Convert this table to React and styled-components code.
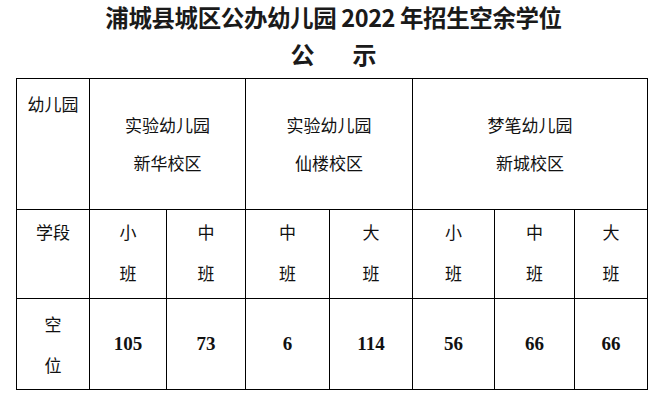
import React from 'react'
import styled, { createGlobalStyle } from 'styled-components'

const GlobalStyle = createGlobalStyle`
  html, body {
    margin: 0;
    padding: 0;
    background: #fff;
    overflow: hidden;
  }
  body {
    font-family: "Liberation Serif", "Noto Sans CJK SC", serif;
    color: #111;
  }
`

const Page = styled.div`
  width: 667px;
  height: 402px;
  padding: 0 16px;
  box-sizing: border-box;
`

const Title = styled.h1`
  margin: 0;
  padding-top: 1px;
  height: 33px;
  line-height: 33px;
  text-align: center;
  font-family: "Noto Sans CJK SC", sans-serif;
  font-weight: 700;
  font-size: 23.5px;
  color: #1a1a1a;
  letter-spacing: -0.4px;
  white-space: nowrap;
`

const Subtitle = styled.h2`
  margin: 4px 0 0;
  height: 32px;
  line-height: 32px;
  text-align: center;
  font-family: "Noto Sans CJK SC", sans-serif;
  font-weight: 700;
  font-size: 24px;
  color: #1a1a1a;
  letter-spacing: 38px;
  padding-left: 38px;
`

const Table = styled.table`
  margin-top: 8px;
  width: 631px;
  border-collapse: collapse;
  table-layout: fixed;
  border: 1.5px solid #000;
`

const Row = styled.tr`
  height: ${p => p.$h}px;
`

const Cell = styled.td`
  border: 1.5px solid #000;
  padding: ${p => (p.$top ? '1px 0 0' : '0')};
  text-align: center;
  vertical-align: ${p => (p.$top ? 'top' : 'middle')};
  font-family: "Noto Sans CJK SC", sans-serif;
  font-size: 17px;
  line-height: ${p => p.$lh || 41}px;
  color: #111;
`

const Number = styled.span`
  font-family: "Liberation Serif", serif;
  font-weight: 700;
  font-size: 19px;
  position: relative;
  top: -1px;
`

const Lines = ({ items }) => items.map((t, i) => <div key={i}>{t}</div>)

const widths = [73, 77, 79, 84, 83, 82, 80, 73]

const schools = [
  { name: '实验幼儿园', campus: '新华校区', span: 2 },
  { name: '实验幼儿园', campus: '仙楼校区', span: 2 },
  { name: '梦笔幼儿园', campus: '新城校区', span: 3 },
]

const grades = ['小', '中', '中', '大', '小', '中', '大']
const seats = [105, 73, 6, 114, 56, 66, 66]

export default function App() {
  return (
    <Page>
      <GlobalStyle />
      <Title>浦城县城区公办幼儿园 2022 年招生空余学位</Title>
      <Subtitle>公示</Subtitle>
      <Table>
        <colgroup>
          {widths.map((w, i) => <col key={i} style={{ width: w }} />)}
        </colgroup>
        <tbody>
          <Row $h={131}>
            <Cell $top $lh={38} style={{ paddingTop: 6 }}>幼儿园</Cell>
            {schools.map((s, i) => (
              <Cell key={i} colSpan={s.span} $lh={38}>
                <Lines items={[s.name, s.campus]} />
              </Cell>
            ))}
          </Row>
          <Row $h={89}>
            <Cell $top>学段</Cell>
            {grades.map((g, i) => (
              <Cell key={i} $top>
                <Lines items={[g, '班']} />
              </Cell>
            ))}
          </Row>
          <Row $h={91}>
            <Cell>
              <Lines items={['空', '位']} />
            </Cell>
            {seats.map((n, i) => (
              <Cell key={i}>
                <Number>{n}</Number>
              </Cell>
            ))}
          </Row>
        </tbody>
      </Table>
    </Page>
  )
}
